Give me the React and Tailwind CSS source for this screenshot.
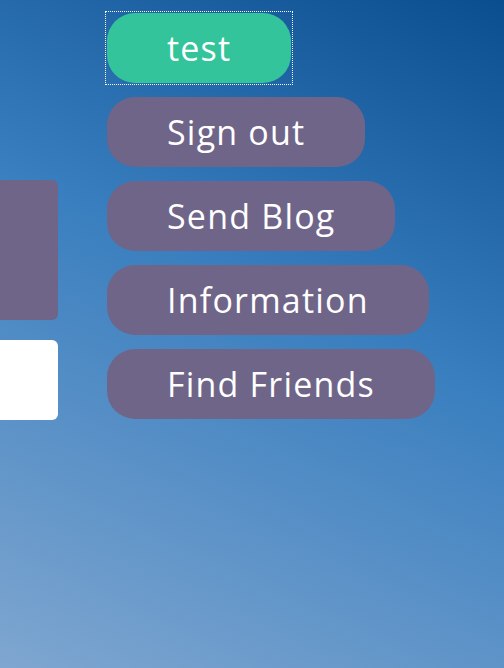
import React from 'react';

const links = ['Sign out', 'Send Blog', 'Information', 'Find Friends'];

const App = () => {
  return (
    <div
      className="h-[668px] w-full overflow-hidden bg-[linear-gradient(205deg,#0a4e90_0%,#3a7fbf_45%,#7fa6d0_100%)] flex gap-[47px]"
      style={{ fontFamily: '"Open Sans", "Noto Sans", sans-serif' }}
    >
      <div className="w-[58px] shrink-0 pt-[180px] flex flex-col gap-[20px]">
        <div className="h-[140px] bg-[#6f6589] rounded-r-[6px]"></div>
        <div className="h-[80px] bg-white rounded-r-[6px]"></div>
      </div>
      <div className="pt-[11px] flex flex-col items-start">
        <div className="border border-dotted border-white p-px mb-[12px]">
          <button className="h-[70px] px-[60px] rounded-[28px] bg-[#33c49b] text-white text-[34px] font-medium tracking-[1.2px] leading-none outline-none">
            test
          </button>
        </div>
        <div className="ml-[2px] flex flex-col items-start gap-[14px]">
          {links.map((l) => (
            <button
              key={l}
              className="h-[70px] px-[60px] rounded-[28px] bg-[#6f6589] text-white text-[34px] font-medium tracking-[1.2px] leading-none whitespace-nowrap"
            >
              {l}
            </button>
          ))}
        </div>
      </div>
    </div>
  );
};

export default App;
